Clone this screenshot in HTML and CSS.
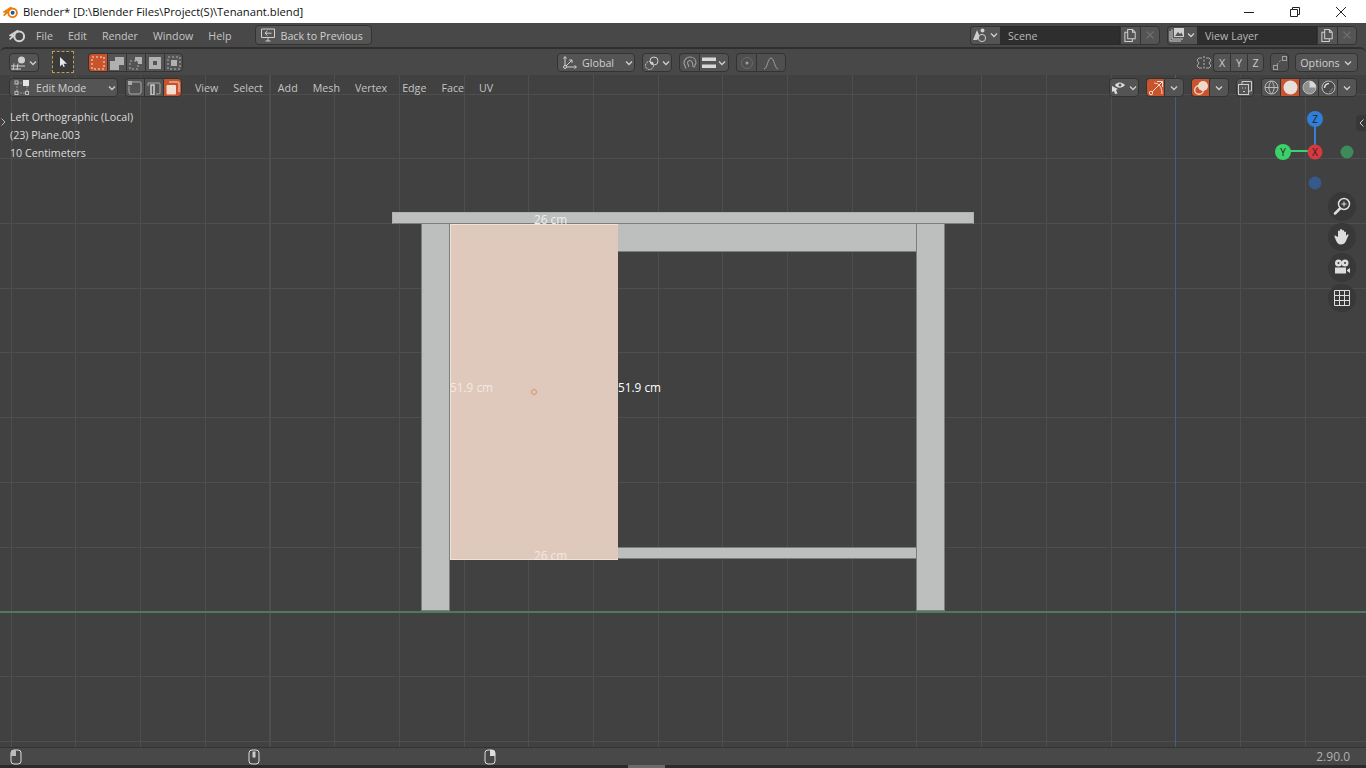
FILE: index.html
```html
<!DOCTYPE html>
<html lang="en">
<head>
    <meta charset="UTF-8">
    <title>Blender</title>
    <link rel="stylesheet" href="styles.css">
</head>
<body>
    <svg class="sprites" width="0" height="0">
        <symbol id="chev" viewBox="0 0 10 10"><path d="M2 3.500 5 6.500 8 3.500" fill="none" stroke="currentColor" stroke-width="1.300"/></symbol>
        <symbol id="logo" viewBox="0 0 16 16"><path d="M8.500 3.200 1 8h3.600L.6 11.600" fill="none" stroke="currentColor" stroke-width="1.600" stroke-linejoin="round"/><circle cx="9.600" cy="8.800" r="4.600" fill="none" stroke="currentColor" stroke-width="1.900"/></symbol>
        <symbol id="copy" viewBox="0 0 16 16"><path d="M5 1.500h5l3 3v7H5zM5 4.500H2v10h8v-3M10 1.500v3h3" fill="none" stroke="currentColor" stroke-width="1.100"/></symbol>
        <symbol id="close" viewBox="0 0 10 10"><path d="M1.500 1.500 8.500 8.500M8.500 1.500 1.500 8.500" stroke="currentColor" stroke-width="1.100"/></symbol>
    </svg>

    <header class="titlebar">
        <svg class="title-logo" width="16" height="16" viewBox="0 0 16 16">
            <path d="M8.500 3.200 1 8h3.600L.6 11.600" fill="none" stroke="#e87d0d" stroke-width="1.700" stroke-linejoin="round"/>
            <circle cx="9.600" cy="8.800" r="4.300" fill="#fff" stroke="#e87d0d" stroke-width="1.900"/>
            <circle cx="9.600" cy="8.800" r="2" fill="#265787"/>
        </svg>
        <span class="title-text">Blender* [D:\Blender Files\Project(S)\Tenanant.blend]</span>
        <div class="win-buttons">
            <span class="win-btn"><svg width="12" height="12"><path d="M1 6.500h10" stroke="#222"/></svg></span>
            <span class="win-btn"><svg width="12" height="12"><path d="M3.500 3V1.500h7v7H8.500M1.500 3.500h7v7h-7z" fill="none" stroke="#222"/></svg></span>
            <span class="win-btn"><svg width="12" height="12"><path d="M1 1l10 10M11 1 1 11" stroke="#222"/></svg></span>
        </div>
    </header>

    <nav class="topbar">
        <svg class="top-logo" width="17" height="17"><use href="#logo"/></svg>
        <span class="menu-item file">File</span>
        <span class="menu-item">Edit</span>
        <span class="menu-item">Render</span>
        <span class="menu-item">Window</span>
        <span class="menu-item">Help</span>
        <button class="widget back-btn">
            <svg width="16" height="14" viewBox="0 0 16 14"><path d="M1.500 1h13v8.500h-13zM5.500 13h5M8 9.500V13M11.500 5.200H5M7.500 2.800 5 5.200 7.500 7.600" fill="none" stroke="currentColor"/></svg>
            <span class="back-label">Back to Previous</span>
        </button>
        <div class="top-right">
            <div class="group">
                <span class="cell icon-drop">
                    <svg width="16" height="16" viewBox="0 0 16 16"><path d="M1 13 5 3l3 7-3 3z" fill="currentColor"/><circle cx="10.500" cy="3.500" r="2" fill="currentColor"/><circle cx="10" cy="11" r="3.600" fill="#545454" stroke="currentColor"/></svg>
                    <svg class="chev" width="10" height="10"><use href="#chev"/></svg>
                </span>
                <span class="field scene-field">Scene</span>
                <span class="cell square"><svg width="15" height="15"><use href="#copy"/></svg></span>
                <span class="cell square off"><svg width="10" height="10"><use href="#close"/></svg></span>
            </div>
            <div class="group">
                <span class="cell icon-drop">
                    <svg width="16" height="16" viewBox="0 0 16 16"><path d="M1 4v10h11M3 2.500v9.500h11" fill="none" stroke="currentColor"/><path d="M5 1h10v9H5z" fill="currentColor"/><path d="M6 9l3-4 2 2 1.500-1.500L14 9z" fill="#545454"/></svg>
                    <svg class="chev" width="10" height="10"><use href="#chev"/></svg>
                </span>
                <span class="field scene-field">View Layer</span>
                <span class="cell square"><svg width="15" height="15"><use href="#copy"/></svg></span>
                <span class="cell square off"><svg width="10" height="10"><use href="#close"/></svg></span>
            </div>
        </div>
    </nav>

    <main class="viewport">
        <div class="scene">
            <div class="grid"></div>
            <div class="axis-y"></div>
            <div class="axis-x"></div>
            <div class="part plank"></div>
            <div class="part leg-left"></div>
            <div class="part leg-right"></div>
            <div class="part rail-top"></div>
            <div class="part rail-bottom"></div>
            <div class="part face"></div>
            <span class="origin"></span>
            <span class="dim dim-top">26 cm</span>
            <span class="dim dim-bottom">26 cm</span>
            <span class="dim dim-left">51.9 cm</span>
            <span class="dim dim-right">51.9 cm</span>
        </div>

        <div class="tool-row">
            <span class="cell drop editor-type">
                <svg width="16" height="16" viewBox="0 0 16 16"><path d="M0 11h14M0 14h10M3 8.500 2 15M7 8.500 6 15" stroke="currentColor" fill="none"/><circle cx="10.500" cy="5" r="3.500" fill="currentColor"/></svg>
                <svg class="chev" width="10" height="10"><use href="#chev"/></svg>
            </span>
            <span class="active-tool">
                <svg width="12" height="12" viewBox="0 0 12 12"><path d="M3 1v9.500l2.200-2.300 1.300 2.800 1.300-.6-1.200-2.700H10z" fill="#e8e8e8"/></svg>
            </span>
            <div class="group select-modes">
                <span class="cell mode on"><svg width="14" height="14"><rect x="1" y="1" width="12" height="12" fill="none" stroke="#f5e6dc" stroke-dasharray="2 2"/></svg></span>
                <span class="cell mode"><svg width="14" height="14"><path d="M5 1h9v8H9v5H0V5h5z" fill="#b0b0b0"/></svg></span>
                <span class="cell mode"><svg width="14" height="14"><path d="M6 1h7v7H9V5H6z" fill="#b0b0b0"/><rect x="1" y="5" width="8" height="8" fill="none" stroke="#b0b0b0" stroke-dasharray="2 2"/></svg></span>
                <span class="cell mode"><svg width="14" height="14"><path d="M1 1h12v12H1zM5 5v4h4V5z" fill="#b0b0b0" fill-rule="evenodd"/></svg></span>
                <span class="cell mode"><svg width="14" height="14"><rect x="4" y="4" width="6" height="6" fill="#b0b0b0"/><rect x="1" y="1" width="12" height="12" fill="none" stroke="#b0b0b0" stroke-dasharray="2 2"/></svg></span>
            </div>

            <div class="center-tools">
                <span class="cell drop orientation">
                    <svg width="16" height="16" viewBox="0 0 16 16"><path d="M3 2v10h11M3 12l7-7M1.500 3.500 3 1.500l1.500 2M12.500 10.500l2 1.500-2 1.500M7 5h3v3" fill="none" stroke="currentColor"/><circle cx="3" cy="12" r="1.500" fill="#545454" stroke="currentColor"/></svg>
                    <span class="label">Global</span>
                    <svg class="chev" width="10" height="10"><use href="#chev"/></svg>
                </span>
                <span class="cell drop pivot">
                    <svg width="16" height="16" viewBox="0 0 16 16"><circle cx="5.500" cy="10.500" r="4" fill="none" stroke="currentColor" stroke-dasharray="2 1"/><circle cx="10" cy="6" r="4" fill="none" stroke="currentColor"/><circle cx="8" cy="8" r="1.300" fill="currentColor"/></svg>
                    <svg class="chev" width="10" height="10"><use href="#chev"/></svg>
                </span>
                <div class="group">
                    <span class="cell square dim-icon"><svg width="16" height="16" viewBox="0 0 16 16"><path d="M4 13.500 2 8.500C2 4 5 2 8 2s6 2 6 6l-2 4.500M11 12l-.5-4C10 6 9 5.500 8 5.500S5.500 6.500 5.500 8L7 12" fill="none" stroke="currentColor" stroke-width="1.100"/></svg></span>
                    <span class="cell drop snap">
                        <svg width="14" height="14"><path d="M0 1.500h14v3.500H0zM0 8.500h14V12H0z" fill="#d8d8d8"/></svg>
                        <svg class="chev" width="10" height="10"><use href="#chev"/></svg>
                    </span>
                </div>
                <div class="group">
                    <span class="cell square dim-icon"><svg width="14" height="14" viewBox="0 0 14 14"><circle cx="7" cy="7" r="5.500" fill="none" stroke="#6a6a6a"/><circle cx="7" cy="7" r="1.500" fill="currentColor"/></svg></span>
                    <span class="cell falloff dim-icon"><svg width="16" height="14" viewBox="0 0 16 14"><path d="M1 13C4 13 5 2 8 2s4 11 7 11" fill="none" stroke="currentColor"/></svg></span>
                </div>
            </div>

            <div class="right-tools top-tools">
                <svg class="mirror" width="16" height="16" viewBox="0 0 16 16"><path d="M8 1v14" stroke="#bbb" stroke-dasharray="2 1.500"/><path d="M6 3H3L1 5l2 3-2 3 2 2h3M10 3h3l2 2-2 3 2 3-2 2h-3" fill="none" stroke="#aaa"/></svg>
                <div class="group axes">
                    <span class="cell axis">X</span><span class="cell axis">Y</span><span class="cell axis">Z</span>
                </div>
                <span class="cell square single dim-icon"><svg width="16" height="16" viewBox="0 0 16 16"><rect x="1.500" y="10.500" width="4" height="4" fill="none" stroke="currentColor"/><rect x="10.500" y="1.500" width="4" height="4" fill="none" stroke="currentColor"/><path d="M5 10c1-3 3-4 6-6" fill="none" stroke="currentColor" stroke-dasharray="2 2"/></svg></span>
                <span class="cell drop options"><span class="label">Options</span><svg class="chev" width="10" height="10"><use href="#chev"/></svg></span>
            </div>
        </div>

        <div class="tool-row mode-row">
            <span class="cell drop edit-mode">
                <svg width="16" height="16" viewBox="0 0 16 16"><path d="M3 3h8M3 3v8M13 6v5M6 13h5" fill="none" stroke="#999" stroke-dasharray="2 1"/><rect x="9" y="0" width="6" height="6" fill="#e4e4e4"/><rect x="1" y="1" width="3" height="3" fill="none" stroke="#bbb"/><rect x="1" y="11.500" width="3" height="3" fill="none" stroke="#bbb"/><rect x="11.500" y="11.500" width="3" height="3" fill="none" stroke="#bbb"/></svg>
                <span class="label">Edit Mode</span>
                <svg class="chev" width="10" height="10"><use href="#chev"/></svg>
            </span>
            <div class="group select-kind">
                <span class="cell square"><svg width="14" height="14" viewBox="0 0 14 14"><path d="M4 1h8a1 1 0 0 1 1 1v9a2 2 0 0 1-2 2H3a2 2 0 0 1-2-2V5" fill="none" stroke="#aaa"/><rect x="0" y="0" width="4" height="4" fill="#aaa"/></svg></span>
                <span class="cell square"><svg width="14" height="14" viewBox="0 0 14 14"><path d="M1 5V2h11a1 1 0 0 1 1 1v9a1 1 0 0 1-1 1H9" fill="none" stroke="#aaa"/><path d="M4 4h3v10H4z" fill="none" stroke="#ccc" stroke-width="1.500"/></svg></span>
                <span class="cell square on"><svg width="14" height="14" viewBox="0 0 14 14"><path d="M3 1h9a1 1 0 0 1 1 1v9" fill="none" stroke="#f2ded2"/><rect x="0.500" y="4" width="9.500" height="9.500" rx="1" fill="#f2ded2"/></svg></span>
            </div>
            <span class="menu-item view">View</span>
            <span class="menu-item">Select</span>
            <span class="menu-item">Add</span>
            <span class="menu-item">Mesh</span>
            <span class="menu-item">Vertex</span>
            <span class="menu-item">Edge</span>
            <span class="menu-item">Face</span>
            <span class="menu-item">UV</span>

            <div class="right-tools">
                <span class="cell drop visibility">
                    <svg width="16" height="16" viewBox="0 0 16 16"><path d="M4 5c2-3.500 7-3.500 10 0-3 3.500-8 3.500-10 0z" fill="#ddd"/><circle cx="9" cy="5" r="1.500" fill="#545454"/><path d="M1 6l6 3-2 1 1.500 3.500L4 14l-1-3-2 1z" fill="#ddd"/></svg>
                    <svg class="chev" width="10" height="10"><use href="#chev"/></svg>
                </span>
                <div class="group">
                    <span class="cell square toggle on"><svg width="16" height="16" viewBox="0 0 16 16"><path d="M9 1.500h5.500V7M14.500 1.500 4 12" fill="none" stroke="#f2ded2"/><path d="M6 3c5 0 8 4 8 11" fill="none" stroke="#f2ded2"/><circle cx="3" cy="13" r="1.700" fill="none" stroke="#f2ded2"/></svg></span>
                    <span class="cell chev-cell"><svg class="chev" width="10" height="10"><use href="#chev"/></svg></span>
                </div>
                <div class="group">
                    <span class="cell square toggle on"><svg width="16" height="16" viewBox="0 0 16 16"><circle cx="10" cy="6" r="5" fill="#eed9cc"/><circle cx="6" cy="10" r="4.300" fill="none" stroke="#eed9cc" stroke-width="1.400"/></svg></span>
                    <span class="cell chev-cell"><svg class="chev" width="10" height="10"><use href="#chev"/></svg></span>
                </div>
                <span class="cell square toggle xray"><svg width="16" height="16" viewBox="0 0 16 16"><path d="M5 4V1.500h9.500V11H12" fill="none" stroke="#ccc"/><rect x="1.500" y="4.500" width="10" height="10" fill="none" stroke="#ccc"/><path d="M5 8h1M8 8h1M6 11.500h2" stroke="#ccc"/></svg></span>
                <div class="group shading">
                    <span class="cell square"><svg width="15" height="15" viewBox="0 0 15 15"><circle cx="7.500" cy="7.500" r="6.500" fill="none" stroke="#bbb"/><path d="M1 7.500h13M7.500 1C4 5 4 10 7.500 14M7.500 1c3.500 4 3.500 9 0 13" fill="none" stroke="#bbb"/></svg></span>
                    <span class="cell square on"><svg width="15" height="15"><circle cx="7.500" cy="7.500" r="7" fill="#e8e0da"/></svg></span>
                    <span class="cell square"><svg width="15" height="15" viewBox="0 0 15 15"><circle cx="7.500" cy="7.500" r="6.500" fill="#8f8f8f" stroke="#bbb"/><path d="M7.500 1a6.500 6.500 0 0 1 6.500 6.500H7.500z" fill="#d8d8d8"/></svg></span>
                    <span class="cell square"><svg width="15" height="15" viewBox="0 0 15 15"><circle cx="7.500" cy="7.500" r="6.500" fill="#4a4a4a" stroke="#bbb"/><path d="M3.500 8A5 5 0 0 1 8 3.500" fill="none" stroke="#ddd" stroke-width="1.500"/><path d="M11.500 8A5 5 0 0 1 8 12" fill="none" stroke="#888"/></svg></span>
                    <span class="cell chev-cell"><svg class="chev" width="10" height="10"><use href="#chev"/></svg></span>
                </div>
            </div>
        </div>

        <div class="view-info">
            <div>Left Orthographic (Local)</div>
            <div>(23) Plane.003</div>
            <div>10 Centimeters</div>
        </div>

        <svg class="panel-arrow arrow-left" width="7" height="10"><path d="M1.500 1.500 5 5 1.500 8.500" fill="none" stroke="#bbb"/></svg>
        <span class="sidebar-tab"><svg width="7" height="10"><path d="M5.500 1.500 2 5l3.500 3.500" fill="none" stroke="#ccc"/></svg></span>

        <svg class="gizmo" width="80" height="86" viewBox="0 0 80 86">
            <path d="M37 40V10" stroke="#3580d2" stroke-width="2"/>
            <path d="M37 40H5" stroke="#3fd070" stroke-width="2"/>
            <circle cx="37" cy="72" r="6.500" fill="#34598a"/>
            <circle cx="69" cy="41" r="6.500" fill="#3d8a5a"/>
            <circle cx="37" cy="8" r="8" fill="#2f7fd8"/>
            <circle cx="5" cy="41" r="8" fill="#3bd06a"/>
            <circle cx="37" cy="41" r="7.500" fill="#d8393f"/>
            <text x="37" y="11.500" class="gizmo-text">Z</text>
            <text x="5" y="44.500" class="gizmo-text">Y</text>
            <text x="37" y="44.500" class="gizmo-text">X</text>
        </svg>

        <div class="nav-buttons">
            <span class="nav-btn"><svg width="18" height="18" viewBox="0 0 18 18"><circle cx="11" cy="7" r="5.500" fill="none" stroke="#ddd" stroke-width="1.500"/><path d="M11 4.500v5M8.500 7h5" stroke="#ddd"/><path d="M2 16.500 7 11.500" stroke="#ddd" stroke-width="2.500" stroke-linecap="round"/></svg></span>
            <span class="nav-btn"><svg width="18" height="18" viewBox="0 0 18 18"><path d="M5 9V3.500a1 1 0 0 1 2 0V2a1 1 0 0 1 2 0v1a1 1 0 0 1 2 0v1.500a1 1 0 0 1 2 0V8c1-1 1.500-2 2.300-1.500.7.500-.3 2-1.300 4-1 3-2.500 6-6 6-3 0-4-2-5-4L1.500 8.500c-.5-1 1-1.500 1.500-.5z" fill="#ddd"/></svg></span>
            <span class="nav-btn"><svg width="18" height="18" viewBox="0 0 18 18"><circle cx="5.500" cy="5" r="3.500" fill="#ddd"/><circle cx="12" cy="5" r="3.500" fill="#ddd"/><circle cx="5.500" cy="5" r="1" fill="#383838"/><circle cx="12" cy="5" r="1" fill="#383838"/><path d="M2 9.500h11v6H2zM14 12l3-2v5l-3-2z" fill="#ddd"/></svg></span>
            <span class="nav-btn"><svg width="16" height="16" viewBox="0 0 16 16"><path d="M.5.500h15v15H.5zM.5 5.500h15M.5 10.500h15M5.500.500v15M10.500.500v15" fill="none" stroke="#ddd"/></svg></span>
        </div>
    </main>

    <footer class="statusbar">
        <span class="mouse mouse-first"><svg width="12" height="16" viewBox="0 0 12 16"><rect x="1" y="1" width="10" height="14" rx="3" fill="none" stroke="#ddd"/><path d="M1 3.500a2.500 2.500 0 0 1 2.500-2.500H6v6H1z" fill="#bbb"/></svg></span>
        <span class="mouse mouse-second"><svg width="12" height="16" viewBox="0 0 12 16"><rect x="1" y="1" width="10" height="14" rx="3" fill="none" stroke="#ddd"/><rect x="4.500" y="2.500" width="3" height="6" fill="#ccc"/></svg></span>
        <span class="mouse mouse-third"><svg width="12" height="16" viewBox="0 0 12 16"><rect x="1" y="1" width="10" height="14" rx="3" fill="none" stroke="#ddd"/><path d="M11 3.500A2.500 2.500 0 0 0 8.500 1H6v6h5z" fill="#ddd"/></svg></span>
        <span class="version">2.90.0</span>
    </footer>
    <div class="bottom-strip"><span class="strip-handle"></span></div>
</body>
</html>
```

FILE: styles.css
```css
* {
    box-sizing: border-box;
}
html, body {
    margin: 0;
    height: 768px;
    overflow: hidden;
}
body {
    display: flex;
    flex-direction: column;
    background-color: #484848;
    font-family: "Open Sans", "Noto Sans", sans-serif;
    font-size: 10.7px;
    color: #cfcfcf;
}
svg {
    display: block;
    flex: none;
}
.sprites {
    position: absolute;
}

/* window title */
.titlebar {
    height: 23px;
    flex: none;
    display: flex;
    align-items: center;
    background-color: #fff;
    color: #111;
    font-size: 11.25px;
    padding-left: 3px;
}
.title-logo {
    margin-right: 4px;
}
.win-buttons {
    margin-left: auto;
    margin-right: 2px;
    display: flex;
}
.win-btn {
    width: 46px;
    display: flex;
    justify-content: center;
}

/* top bar */
.topbar {
    height: 24px;
    flex: none;
    display: flex;
    align-items: center;
    background-color: #484848;
    padding-left: 9px;
}
.top-logo {
    color: #d4d4d4;
}
.menu-item {
    color: #c4c4c4;
    margin-left: 15px;
    padding-top: 1px;
    white-space: nowrap;
}
.file {
    margin-left: 10px;
}
.widget, .cell {
    background-color: #545454;
    color: #cfcfcf;
    font: inherit;
    border: 1px solid #333;
}
.back-btn {
    margin-left: 24px;
    width: 117px;
    height: 20px;
    padding: 0 0 0 4px;
    border-radius: 4px;
    display: flex;
    align-items: center;
    gap: 4px;
    white-space: nowrap;
}
.back-label {
    padding-top: 1px;
}
.top-right {
    margin-left: auto;
    margin-right: 9px;
    display: flex;
    gap: 7px;
}

/* widgets */
.group {
    display: flex;
}
.group > .cell {
    border-radius: 0;
    border-right-width: 0;
}
.group > .cell:first-child {
    border-radius: 4px 0 0 4px;
}
.group > .cell:last-child {
    border-radius: 0 4px 4px 0;
    border-right-width: 1px;
}
.cell {
    height: 19px;
    display: flex;
    align-items: center;
    justify-content: center;
    border-radius: 4px;
    white-space: nowrap;
}
.chev {
    color: #cfcfcf;
}
.square {
    width: 20px;
}
.off {
    color: #707070;
}
.on {
    background-color: #c8532c;
    color: #f2ded2;
}
.dim-icon {
    color: #a0a0a0;
    background-color: #4f4f4f;
}
.drop {
    gap: 1px;
}
.icon-drop {
    width: 30px;
    gap: 1px;
}
.field {
    height: 19px;
    background-color: #2e2e2e;
    border: 1px solid #2a2a2a;
    border-left: 0;
    color: #b8b8b8;
    display: flex;
    align-items: center;
}
.scene-field {
    width: 120px;
    padding: 1px 0 0 8px;
}

/* 3d viewport */
.viewport {
    position: relative;
    height: 700px;
    flex: none;
    overflow: hidden;
    background-color: #414141;
    border-top: 2px solid #2f2f2f;
    border-radius: 6px 6px 0 0;
}
.scene {
    position: absolute;
    left: 0;
    top: -2px;
    width: 1366px;
    height: 702px;
}
.grid {
    position: absolute;
    left: -54px;
    top: -18px;
    right: 0;
    bottom: 0;
    background-image:
        repeating-linear-gradient(90deg, #4e4e4e 0 1px, transparent 1px 64.7px),
        repeating-linear-gradient(180deg, #4e4e4e 0 1px, transparent 1px 64.7px);
}
.axis-y {
    position: absolute;
    left: 1175px;
    top: 0;
    bottom: 0;
    width: 1px;
    background-color: #3f5f85;
}
.axis-x {
    position: absolute;
    left: 0;
    right: 0;
    top: 564px;
    height: 2px;
    background-color: #4f7a62;
}
.part {
    position: absolute;
    background-color: #bcbfbd;
    border: 1px solid #7c7e7d;
}
.plank {
    left: 392px;
    top: 165px;
    width: 582px;
    height: 12px;
    border-color: #b0b2b0 #b0b2b0 #7c7e7d;
}
.leg-left {
    left: 421px;
    top: 177px;
    width: 29px;
    height: 387px;
    border-top: 0;
}
.leg-right {
    left: 916px;
    top: 177px;
    width: 29px;
    height: 387px;
    border-top: 0;
}
.rail-top {
    left: 618px;
    top: 177px;
    width: 299px;
    height: 28px;
    border-top: 0;
    border-left: 0;
}
.rail-bottom {
    left: 618px;
    top: 500px;
    width: 299px;
    height: 12px;
    border-left: 0;
}
.face {
    left: 450px;
    top: 177px;
    width: 168px;
    height: 336px;
    background-color: #dfc9bc;
    border: 1px solid #f1e2d9;
    border-right: 0;
}
.origin {
    position: absolute;
    left: 531px;
    top: 342px;
    width: 6px;
    height: 6px;
    border-radius: 50%;
    border: 1px solid #e0905c;
}
.dim {
    position: absolute;
    color: #fff;
    font-size: 11.8px;
    line-height: 14px;
    white-space: nowrap;
}
.dim-top {
    left: 534px;
    top: 165px;
    color: #eee;
}
.dim-bottom {
    left: 534px;
    top: 501px;
    color: #f4e8e1;
}
.dim-left {
    left: 450px;
    top: 333px;
    color: #f4e8e1;
}
.dim-right {
    left: 618px;
    top: 333px;
}

/* header rows over the viewport */
.tool-row {
    position: relative;
    height: 26px;
    padding: 4px 8px 0 9px;
    display: flex;
    align-items: flex-start;
    background-color: #484848;
}
.mode-row {
    background: none;
    padding: 3px 9px 0 9px;
}
.editor-type {
    width: 30px;
}
.active-tool {
    margin: -2px 0 0 13px;
    width: 22px;
    height: 22px;
    background-color: #3a3a3a;
    border: 1px dashed #c59a4a;
    display: flex;
    align-items: center;
    justify-content: center;
}
.select-modes {
    margin-left: 14px;
}
.mode {
    width: 19px;
}
.center-tools {
    margin-left: 374px;
    display: flex;
    gap: 7px;
}
.orientation {
    width: 78px;
    justify-content: flex-start;
    padding-left: 4px;
}
.orientation .label {
    margin-left: 3px;
    margin-right: auto;
}
.pivot {
    width: 30px;
}
.snap {
    width: 30px;
}
.falloff {
    width: 30px;
}
.right-tools {
    margin-left: auto;
    display: flex;
    align-items: center;
    gap: 7px;
}
.top-tools {
    gap: 6px;
}
.axes .axis {
    width: 17px;
}
.mirror {
    margin-right: -5px;
}
.single {
    width: 19px;
}
.toggle {
    width: 18px;
}
.options {
    width: 63px;
    gap: 3px;
}
.edit-mode {
    width: 109px;
    justify-content: flex-start;
    padding-left: 4px;
}
.edit-mode .label {
    margin-left: 5px;
    margin-right: auto;
}
.select-kind {
    margin-left: 7px;
}
.select-kind .cell {
    width: 19px;
}
.view {
    margin-left: 13px;
}
.mode-row > .menu-item {
    margin-top: 2px;
}
.visibility {
    width: 30px;
}
.chev-cell {
    width: 20px;
}
.shading .square {
    width: 19px;
}
.view-info {
    position: absolute;
    left: 10px;
    top: 59px;
    line-height: 18px;
    color: #dcdcdc;
}
.panel-arrow {
    position: absolute;
}
.arrow-left {
    left: 0;
    top: 68px;
}
.sidebar-tab {
    position: absolute;
    right: 0;
    top: 66px;
    width: 10px;
    height: 16px;
    background-color: #383838;
    border-radius: 4px 0 0 4px;
    display: flex;
    align-items: center;
    justify-content: center;
}
.gizmo {
    position: absolute;
    left: 1278px;
    top: 62px;
    overflow: visible;
}
.gizmo-text {
    font-size: 10px;
    text-anchor: middle;
    fill: #222;
}
.nav-buttons {
    position: absolute;
    left: 1328px;
    top: 143px;
    display: flex;
    flex-direction: column;
    gap: 2px;
}
.nav-btn {
    width: 28px;
    height: 28.5px;
    border-radius: 50%;
    background-color: #383838;
    display: flex;
    align-items: center;
    justify-content: center;
}

/* status bar */
.statusbar {
    height: 18px;
    flex: none;
    display: flex;
    align-items: center;
    background-color: #484848;
    border-top: 1px solid #333;
    color: #b0b0b0;
}
.mouse-first {
    margin-left: 10px;
}
.mouse-second {
    margin-left: 226px;
}
.mouse-third {
    margin-left: 224px;
}
.version {
    margin-left: auto;
    margin-right: 16px;
    font-size: 12px;
}
.bottom-strip {
    height: 3px;
    flex: none;
    background-color: #2b2b2b;
    padding-left: 628px;
}
.strip-handle {
    display: block;
    width: 37px;
    height: 3px;
    background-color: #6b6b6b;
}
```
